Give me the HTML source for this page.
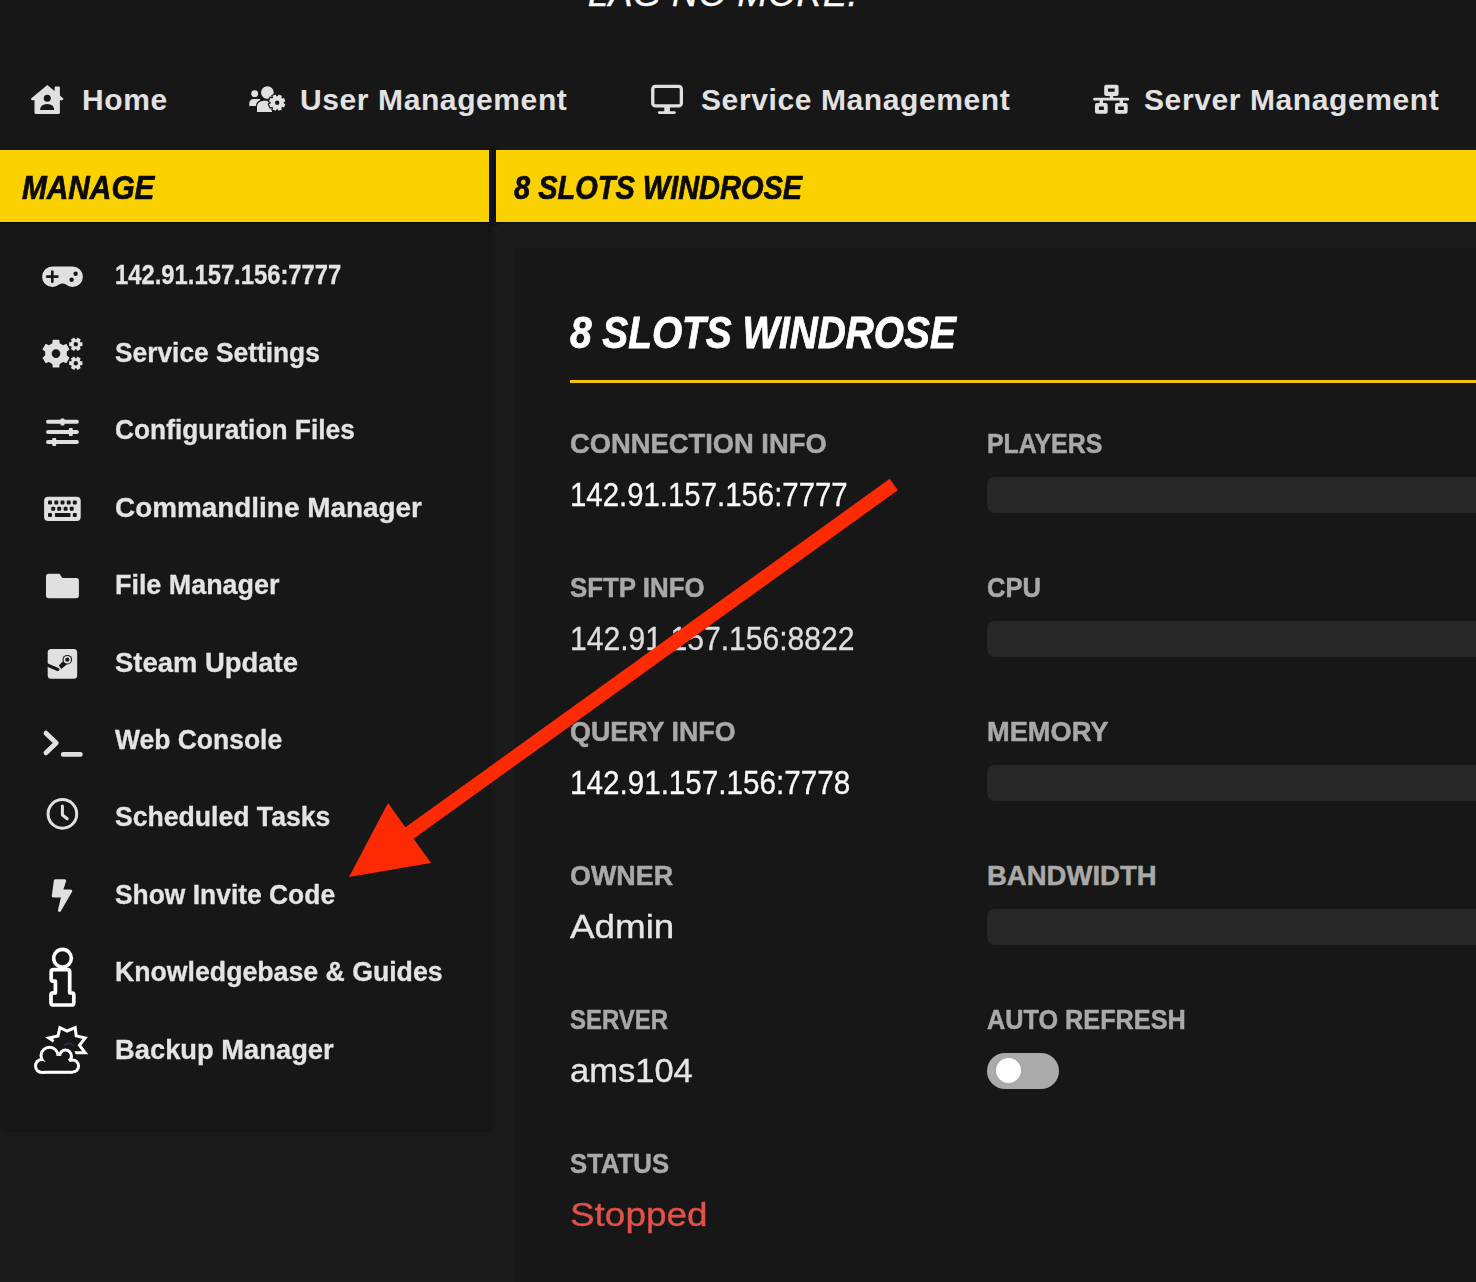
<!DOCTYPE html>
<html><head><meta charset="utf-8">
<style>
*{margin:0;padding:0;box-sizing:border-box}
html,body{width:1476px;height:1282px;overflow:hidden;background:#1b1b1b;font-family:"Liberation Sans",sans-serif}
.a{position:absolute;white-space:nowrap;line-height:1;transform-origin:0 0}
#top{position:absolute;left:0;top:0;width:1476px;height:150px;background:#171717}
.nav{color:#e2e2e2;font-size:30px;font-weight:bold;letter-spacing:0.6px}
.ybar{position:absolute;top:150px;height:72px;background:#fcd100;box-shadow:0 1px 1px rgba(0,0,0,.6)}
.yt{color:#0a0a0a;font-size:33px;font-weight:bold;font-style:italic;-webkit-text-stroke:0.7px #0a0a0a}
#side{position:absolute;left:0;top:150px;width:489px;height:979px;background:#171717;box-shadow:1px 1px 5px rgba(0,0,0,.45)}
.si{color:#e4e4e4;font-size:28px;font-weight:bold;left:115px;-webkit-text-stroke:0.3px #e4e4e4}
#card{position:absolute;left:516px;top:249px;width:980px;height:1100px;background:#171717;box-shadow:0 0 4px rgba(0,0,0,.3)}
.lb{color:#a9a9a9;font-size:27.5px;font-weight:bold;-webkit-text-stroke:0.5px #a9a9a9}
.vl{color:#f8f8f8;font-size:33px;-webkit-text-stroke:0.35px currentColor}
.bar{position:absolute;left:987px;width:520px;height:36px;border-radius:8px;background:#272727}
svg{position:absolute;left:0;top:0}
</style></head><body>
<div id="top"></div>
<div class="a" style="left:588px;top:-24.5px;font-size:36px;font-style:italic;color:#fff;letter-spacing:0.5px;-webkit-text-stroke:0.4px #fff">LAG NO MORE.</div>

<div class="a nav" style="left:82px;top:84.6px">Home</div>
<div class="a nav" style="left:300px;top:84.6px">User Management</div>
<div class="a nav" style="left:701px;top:84.6px">Service Management</div>
<div class="a nav" style="left:1144px;top:84.6px">Server Management</div>

<div id="side"></div>
<div style="position:absolute;left:488px;top:146px;width:9px;height:80px;background:#111417;filter:blur(0.8px)"></div>
<div class="ybar" style="left:0;width:489px"></div>
<div class="ybar" style="left:496px;width:980px"></div>
<div class="a yt" style="left:22px;top:170.8px;transform:scaleX(0.903)">MANAGE</div>
<div class="a yt" style="left:514px;top:170.8px;transform:scaleX(0.878)">8 SLOTS WINDROSE</div>

<div class="a si" style="top:260.6px;transform:scaleX(0.85)">142.91.157.156:7777</div>
<div class="a si" style="top:339.9px;font-size:27px;transform:scaleX(0.975)">Service Settings</div>
<div class="a si" style="top:417.3px;font-size:27px;transform:scaleX(0.975)">Configuration Files</div>
<div class="a si" style="top:494.7px;font-size:27px;transform:scaleX(1.033)">Commandline Manager</div>
<div class="a si" style="top:572.1px;font-size:27px;transform:scaleX(0.996)">File Manager</div>
<div class="a si" style="top:649.5px;font-size:27px;transform:scaleX(1.016)">Steam Update</div>
<div class="a si" style="top:726.9px;font-size:27px;transform:scaleX(0.980)">Web Console</div>
<div class="a si" style="top:804.3px;font-size:27px;transform:scaleX(0.985)">Scheduled Tasks</div>
<div class="a si" style="top:881.7px;font-size:27px;transform:scaleX(0.978)">Show Invite Code</div>
<div class="a si" style="top:959.1px;font-size:27px;transform:scaleX(0.988)">Knowledgebase &amp; Guides</div>
<div class="a si" style="top:1036.5px;font-size:27px;transform:scaleX(1.012)">Backup Manager</div>

<div id="card"></div>
<div class="a" style="left:570px;top:310px;font-size:45px;font-weight:bold;font-style:italic;color:#fff;-webkit-text-stroke:0.8px #fff;transform:scaleX(0.862)">8 SLOTS WINDROSE</div>
<div style="position:absolute;left:570px;top:380px;width:906px;height:3px;background:#f2c200"></div>

<div class="a lb" style="left:570px;top:430.3px;transform:scaleX(0.994)">CONNECTION INFO</div>
<div class="a vl" style="left:570px;top:478.4px;transform:scaleX(0.89)">142.91.157.156:7777</div>
<div class="a lb" style="left:570px;top:574.3px;transform:scaleX(0.94)">SFTP INFO</div>
<div class="a vl" style="left:570px;top:622.4px;transform:scaleX(0.912);color:#dedede">142.91.157.156:8822</div>
<div class="a lb" style="left:570px;top:718.3px;transform:scaleX(0.976)">QUERY INFO</div>
<div class="a vl" style="left:570px;top:766.4px;transform:scaleX(0.898)">142.91.157.156:7778</div>
<div class="a lb" style="left:570px;top:862.3px;transform:scaleX(0.978)">OWNER</div>
<div class="a vl" style="left:570px;top:910.4px;transform:scaleX(1.115);color:#e6e6e6">Admin</div>
<div class="a lb" style="left:570px;top:1006.3px;transform:scaleX(0.87)">SERVER</div>
<div class="a vl" style="left:570px;top:1054.4px;transform:scaleX(1.046);color:#e6e6e6">ams104</div>
<div class="a lb" style="left:570px;top:1150.3px;transform:scaleX(0.935)">STATUS</div>
<div class="a vl" style="left:570px;top:1198.4px;color:#e2514c;transform:scaleX(1.118)">Stopped</div>

<div class="a lb" style="left:987px;top:430.3px;transform:scaleX(0.905)">PLAYERS</div>
<div class="bar" style="top:477px"></div>
<div class="a lb" style="left:987px;top:574.3px;transform:scaleX(0.93)">CPU</div>
<div class="bar" style="top:621px"></div>
<div class="a lb" style="left:987px;top:718.3px;transform:scaleX(0.99)">MEMORY</div>
<div class="bar" style="top:765px"></div>
<div class="a lb" style="left:987px;top:862.3px">BANDWIDTH</div>
<div class="bar" style="top:909px"></div>
<div class="a lb" style="left:987px;top:1006.3px;transform:scaleX(0.918)">AUTO REFRESH</div>
<div style="position:absolute;left:987px;top:1053px;width:72px;height:36px;border-radius:18px;background:#aaa"></div>
<div style="position:absolute;left:996px;top:1058px;width:25px;height:25px;border-radius:50%;background:#fff"></div>

<svg width="1476" height="1282" viewBox="0 0 1476 1282" style="position:absolute;left:0;top:0">
<g fill="#e0e0e0">
<!-- home -->
<path d="M47.3,85 L54.6,91 L54.6,87.6 Q54.6,86.4 55.8,86.4 L58.7,86.4 Q59.9,86.4 59.9,87.6 L59.9,95.4 L63.3,98.4 Q63.6,99.8 62,100.3 L59.9,100.3 L59.9,112.4 Q59.9,113.9 58.4,113.9 L36,113.9 Q34.5,113.9 34.5,112.4 L34.5,100.3 L32.3,100.3 Q30.6,99.8 31.1,98.4 Z"/>
<circle cx="47.3" cy="98.3" r="3.5" fill="#171717"/>
<path d="M40,109.9 Q40.3,103.9 47.2,103.9 Q54,103.9 54.2,109.9 Z" fill="#171717"/>
<!-- users cog -->
<circle cx="254.7" cy="93.7" r="3.4"/>
<path d="M249.3,106 V103.5 Q249.3,99 254,99 H260 V106 Z"/>
<circle cx="267.4" cy="92.5" r="6.3"/>
<path d="M257,112 V107.5 Q257,100.8 264,100.8 H272 V112 Z" stroke="#171717" stroke-width="2.6" paint-order="stroke"/>
<path fill-rule="evenodd" d="M283.67,103.27 L285.36,104.23 L284.05,107.38 L282.18,106.87 L281.37,107.68 L281.88,109.55 L278.73,110.86 L277.77,109.17 L276.63,109.17 L275.67,110.86 L272.52,109.55 L273.03,107.68 L272.22,106.87 L270.35,107.38 L269.04,104.23 L270.73,103.27 L270.73,102.13 L269.04,101.17 L270.35,98.02 L272.22,98.53 L273.03,97.72 L272.52,95.85 L275.67,94.54 L276.63,96.23 L277.77,96.23 L278.73,94.54 L281.88,95.85 L281.37,97.72 L282.18,98.53 L284.05,98.02 L285.36,101.17 L283.67,102.13ZM275.00,102.70 a2.20,2.20 0 1 0 4.40,0 a2.20,2.20 0 1 0 -4.40,0Z" stroke="#171717" stroke-width="2.4" paint-order="stroke"/>
<!-- monitor -->
<rect x="652.75" y="86.35" width="28.6" height="19.6" rx="2.6" fill="none" stroke="#e0e0e0" stroke-width="3.3"/>
<rect x="664.3" y="107" width="5.6" height="5"/>
<rect x="657.9" y="111.2" width="17.9" height="2.8" rx="1.4"/>
<!-- network -->
<path fill-rule="evenodd" d="M1106.2,84.7 h10.4 q2,0 2,2 v7.2 q0,2 -2,2 h-10.4 q-2,0 -2,-2 v-7.2 q0,-2 2,-2Z M1108,88.6 v3.2 h6.7 v-3.2Z"/>
<rect x="1109.8" y="95" width="3.4" height="3.5"/>
<rect x="1093.2" y="97.8" width="35.9" height="2.8" rx="1.4"/>
<rect x="1099.6" y="100" width="3.4" height="3.5"/>
<rect x="1119.6" y="100" width="3.4" height="3.5"/>
<path fill-rule="evenodd" d="M1097,102.9 h8.7 q2,0 2,2 v6.8 q0,2 -2,2 h-8.7 q-2,0 -2,-2 v-6.8 q0,-2 2,-2Z M1098.9,106.6 v3.4 h5 v-3.4Z"/>
<path fill-rule="evenodd" d="M1117,102.9 h8.6 q2,0 2,2 v6.8 q0,2 -2,2 h-8.6 q-2,0 -2,-2 v-6.8 q0,-2 2,-2Z M1118.2,106.6 v3.4 h5.7 v-3.4Z"/>

<!-- gamepad -->
<path d="M52.4,266.4 L72.6,266.4 A10.3,10.3 0 0 1 72.6,287 Q68.6,287 66,284.6 Q64.5,283.4 62.5,283.4 Q60.5,283.4 59,284.6 Q56.4,287 52.4,287 A10.3,10.3 0 0 1 52.4,266.4Z"/>
<g fill="#171717"><path d="M47.2,276.6 H57.4 M52.3,271.5 V281.7" stroke="#171717" stroke-width="2.7" stroke-linecap="round"/>
<circle cx="75.6" cy="273.7" r="2.2"/><circle cx="71.6" cy="279.7" r="2.2"/></g>
<!-- cogs -->
<path fill-rule="evenodd" d="M52.33,343.23 L52.74,339.78 L59.26,339.78 L59.67,343.23 L63.14,345.24 L66.34,343.87 L69.60,349.51 L66.82,351.60 L66.82,355.60 L69.60,357.69 L66.34,363.33 L63.14,361.96 L59.67,363.97 L59.26,367.42 L52.74,367.42 L52.33,363.97 L48.86,361.96 L45.66,363.33 L42.40,357.69 L45.18,355.60 L45.18,351.60 L42.40,349.51 L45.66,343.87 L48.86,345.24ZM51.70,353.60 a4.30,4.30 0 1 0 8.60,0 a4.30,4.30 0 1 0 -8.60,0Z"/>
<path fill-rule="evenodd" d="M80.49,342.19 L82.44,342.32 L82.44,346.08 L80.49,346.21 L79.89,347.25 L80.75,349.01 L77.49,350.89 L76.40,349.26 L75.20,349.26 L74.11,350.89 L70.85,349.01 L71.71,347.25 L71.11,346.21 L69.16,346.08 L69.16,342.32 L71.11,342.19 L71.71,341.15 L70.85,339.39 L74.11,337.51 L75.20,339.14 L76.40,339.14 L77.49,337.51 L80.75,339.39 L79.89,341.15ZM73.60,344.20 a2.20,2.20 0 1 0 4.40,0 a2.20,2.20 0 1 0 -4.40,0Z"/>
<path fill-rule="evenodd" d="M80.49,361.19 L82.44,361.32 L82.44,365.08 L80.49,365.21 L79.89,366.25 L80.75,368.01 L77.49,369.89 L76.40,368.26 L75.20,368.26 L74.11,369.89 L70.85,368.01 L71.71,366.25 L71.11,365.21 L69.16,365.08 L69.16,361.32 L71.11,361.19 L71.71,360.15 L70.85,358.39 L74.11,356.51 L75.20,358.14 L76.40,358.14 L77.49,356.51 L80.75,358.39 L79.89,360.15ZM73.60,363.20 a2.20,2.20 0 1 0 4.40,0 a2.20,2.20 0 1 0 -4.40,0Z"/>
<!-- sliders -->
<g stroke="#e0e0e0" stroke-width="3.9" stroke-linecap="round"><path d="M48,421.8 H76.9 M48,432 H76.9 M48,442 H76.9"/></g>
<rect x="60.5" y="418.6" width="4" height="6.9" rx="1"/>
<rect x="68.8" y="428" width="4" height="8" rx="1"/>
<rect x="52.2" y="438" width="4" height="8" rx="1"/>
<!-- keyboard -->
<rect x="44.1" y="496.7" width="36.6" height="24.3" rx="4"/>
<g fill="#171717">
<rect x="48" y="500.5" width="4" height="4" rx="1"/><rect x="54.3" y="500.5" width="4" height="4" rx="1"/><rect x="60.5" y="500.5" width="4" height="4" rx="1"/><rect x="66.7" y="500.5" width="4" height="4" rx="1"/><rect x="72.8" y="500.5" width="4" height="4" rx="1"/>
<rect x="51.2" y="506.8" width="4" height="4" rx="1"/><rect x="57.2" y="506.8" width="4" height="4" rx="1"/><rect x="63.6" y="506.8" width="4" height="4" rx="1"/><rect x="69.7" y="506.8" width="4" height="4" rx="1"/>
<rect x="48" y="512.9" width="4" height="4" rx="1"/><rect x="54.9" y="512.9" width="15.6" height="4" rx="1"/><rect x="72.8" y="512.9" width="4" height="4" rx="1"/>
</g>
<!-- folder -->
<path d="M46,576.5 Q46,573.7 48.8,573.7 L59.5,573.7 L62.4,578 L76.1,578 Q78.9,578 78.9,580.8 L78.9,595.5 Q78.9,598.3 76.1,598.3 L48.8,598.3 Q46,598.3 46,595.5Z"/>
<!-- steam -->
<rect x="47.7" y="649" width="29.5" height="29.7" rx="3.5"/>
<g fill="#171717">
<circle cx="67.3" cy="659.7" r="4.8"/>
<path d="M45.5,664.2 L57.8,669.4" stroke="#171717" stroke-width="3.3" stroke-linecap="round"/>
<polygon points="58.8,665.4 61.2,669 66.8,664.4 63.2,661"/>
</g>
<circle cx="67.3" cy="659.7" r="3.7"/>
<circle cx="67.3" cy="659.7" r="2.1" fill="#171717"/>
<!-- terminal -->
<polyline points="46,733.2 56.2,743 46,752.8" fill="none" stroke="#e0e0e0" stroke-width="4.9" stroke-linecap="round" stroke-linejoin="round"/>
<rect x="60.9" y="752" width="21.8" height="4.8" rx="2.2"/>
<!-- clock -->
<circle cx="62.4" cy="813.9" r="14.3" fill="none" stroke="#e0e0e0" stroke-width="3"/>
<polyline points="62.4,806 62.4,815 67.2,818.8" fill="none" stroke="#e0e0e0" stroke-width="3" stroke-linecap="round" stroke-linejoin="round"/>
<!-- bolt -->
<path transform="translate(51.8,879.2) scale(0.0639)" d="M296 160H180.6l42.6-129.8C227.2 15 215.7 0 200 0H56C44 0 33.8 8.9 32.2 20.8l-32 240C-1.7 275.2 9.5 288 24 288h118.7L96.6 482.5c-3.6 15.2 8 29.5 23.3 29.5 8.4 0 16.4-4.4 20.8-12l176-304c9.3-15.9-2.2-36-20.7-36z"/>
</g>
<g fill="none" stroke="#ffffff" stroke-width="3.2" stroke-linejoin="round">
<!-- info -->
<circle cx="62.5" cy="958.2" r="8.8" stroke-width="3.6"/>
<path stroke-width="3.7" d="M51.2,972 Q51.2,969.7 53.5,969.7 H67.4 Q69.7,969.7 69.7,972 V992.8 H71.5 Q73.8,992.8 73.8,995.1 V1002.7 Q73.8,1005 71.5,1005 H53.3 Q51,1005 51,1002.7 V995.1 Q51,992.8 53.3,992.8 H55.4 V981.2 H53.5 Q51.2,981.2 51.2,978.9 Z"/>
<!-- cloud sun -->
</g>
<polyline points="53.7,1041.3 48.8,1038 58,1035.9 59.9,1027.7 67.1,1031 75.2,1027.7 76.2,1035.9 85.2,1038 79.5,1045.3 85.2,1052.8 76.7,1052.8 70,1052" fill="none" stroke="#fff" stroke-width="3" stroke-linejoin="miter" stroke-miterlimit="3"/>
<path d="M63.5,1047.5 A5.5,5.5 0 0 1 73.5,1046" fill="none" stroke="#26355f" stroke-width="1.4"/>
<g fill="#171717"><circle cx="42.0" cy="1066.0" r="11.0"/><circle cx="49.5" cy="1055.7" r="13.0"/><circle cx="65.5" cy="1056.0" r="10.4"/><circle cx="72.5" cy="1066.0" r="10.6"/><rect x="42" y="1056" width="30.5" height="20.8"/></g><g fill="#fff"><circle cx="42.0" cy="1066.0" r="8.0"/><circle cx="49.5" cy="1055.7" r="10.0"/><circle cx="65.5" cy="1056.0" r="7.4"/><circle cx="72.5" cy="1066.0" r="7.6"/><rect x="42" y="1056" width="30.5" height="17.8"/></g><g fill="#171717"><circle cx="42.0" cy="1066.0" r="5.0"/><circle cx="49.5" cy="1055.7" r="7.0"/><circle cx="65.5" cy="1056.0" r="4.4"/><circle cx="72.5" cy="1066.0" r="4.6"/><polygon points="42,1066 49.5,1055.7 65.5,1056 72.5,1066 72.5,1070.8 42,1070.8"/></g>
<g>

<!-- arrow -->
<g fill="#fe2a04">
<line x1="893.75" y1="484.5" x2="405" y2="836.3" stroke="#fe2a04" stroke-width="14"/>
<polygon points="349,877 388,803 431,863"/>
</g>
</svg>
</body></html>
